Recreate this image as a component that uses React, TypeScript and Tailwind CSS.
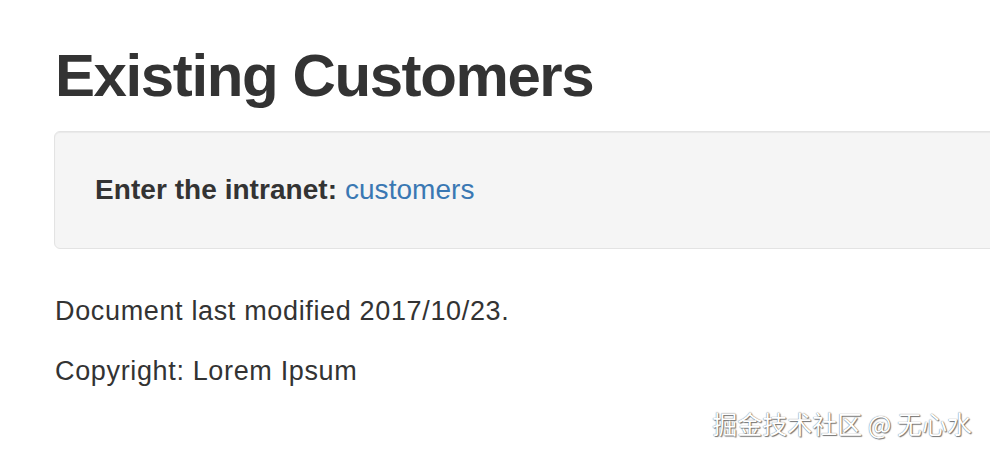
import React from "react";

export default function App() {
  return (
    <div
      className="relative w-[990px] h-[454px] overflow-hidden bg-white text-[#333333]"
      style={{ fontFamily: '"Liberation Sans", Arial, Helvetica, sans-serif' }}
    >
      <div className="pl-[54px] pt-[43px] w-[1100px]">
        <h1 className="text-[60px] leading-[66px] font-bold tracking-[-1.4px] m-0 pl-[1px]">
          Existing Customers
        </h1>
        <div className="mt-[22px] w-[1000px] h-[118px] box-border rounded-[6px] border border-[#e3e3e3] bg-[#f5f5f5] shadow-[inset_0_1px_1px_rgba(0,0,0,0.05)] px-[40px] pt-[43px]">
          <div className="text-[28px] leading-[30px] tracking-[0.05px]">
            <span className="font-bold">Enter the intranet:</span>{" "}
            <a className="text-[#3a78b3]">customers</a>
          </div>
        </div>
        <p className="mt-[45px] pl-[1px] text-[27px] leading-[35px] tracking-[0.65px]">
          Document last modified 2017/10/23.
        </p>
        <p className="mt-[25px] pl-[1px] text-[27px] leading-[35px] tracking-[0.65px]">
          Copyright: Lorem Ipsum
        </p>
      </div>
      <div
        className="absolute right-[18px] top-[408px] text-[25px] leading-[30px] text-white whitespace-nowrap"
        style={{
          fontFamily: '"Noto Sans CJK SC", "Liberation Sans", sans-serif',
          textShadow: "0 0 1px #555, 1px 1px 1px #777",
        }}
      >
        掘金技术社区 @ 无心水
      </div>
    </div>
  );
}
